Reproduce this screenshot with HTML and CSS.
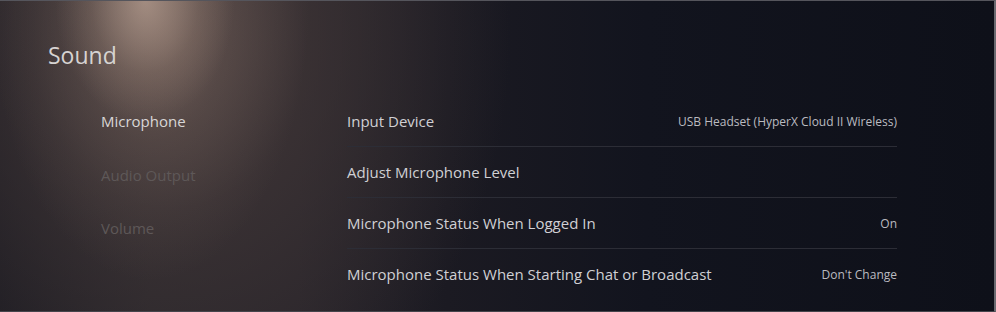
FILE: index.html
```html
<!DOCTYPE html>
<html lang="en">
<head>
<meta charset="utf-8">
<title>Sound</title>
<link rel="stylesheet" href="styles.css">
</head>
<body>
<div class="screen">
  <h1 class="title">Sound</h1>
  <div class="content">
    <nav class="nav">
      <div class="nav-item active">Microphone</div>
      <div class="nav-item">Audio Output</div>
      <div class="nav-item">Volume</div>
    </nav>
    <div class="list">
      <div class="row"><span class="label">Input Device</span><span class="value">USB Headset (HyperX Cloud II Wireless)</span></div>
      <div class="row"><span class="label">Adjust Microphone Level</span></div>
      <div class="row"><span class="label">Microphone Status When Logged In</span><span class="value">On</span></div>
      <div class="row last"><span class="label">Microphone Status When Starting Chat or Broadcast</span><span class="value">Don't Change</span></div>
    </div>
  </div>
</div>
</body>
</html>
```
FILE: styles.css
```css
html, body {
  margin: 0;
  padding: 0;
}
body {
  width: 996px;
  height: 312px;
  overflow: hidden;
  background: #111320;
  font-family: "Open Sans", "Noto Sans", sans-serif;
}
.screen {
  box-sizing: border-box;
  width: 996px;
  height: 312px;
  border-top: 1px solid #55555c;
  border-right: 2px solid #6a6a70;
  border-bottom: 1px solid #45454c;
  background:
    radial-gradient(ellipse 90px 120px at 145px 0px, rgba(195,170,155,0.6) 0%, rgba(170,145,130,0.2) 60%, rgba(150,125,115,0) 100%),
    radial-gradient(ellipse 160px 280px at 150px 0px, rgba(160,135,122,0.45) 0%, rgba(140,118,108,0.2) 50%, rgba(120,100,95,0) 100%),
    radial-gradient(ellipse 340px 420px at 170px 40px, rgba(90,75,72,0.85) 0%, rgba(68,57,57,0.6) 40%, rgba(40,36,42,0) 100%),
    linear-gradient(90deg, #1c1b22 0%, #28252a 15%, #28242a 30%, #1b1a22 45%, #12141e 65%, #0e1019 100%);
  padding: 39px 0 0 48px;
}
.title {
  margin: 0;
  font-size: 23px;
  font-weight: 400;
  line-height: 30px;
  color: #d6d3d2;
}
.content {
  display: flex;
  margin-top: 26px;
}
.nav {
  width: 246px;
  padding-left: 53px;
  display: flex;
  flex-direction: column;
  margin-top: -1px;
}
.nav-item {
  height: 53.5px;
  line-height: 53.5px;
  font-size: 15px;
  color: #5e5858;
}
.nav-item.active {
  color: #d8d6d6;
}
.list {
  width: 550px;
  display: flex;
  flex-direction: column;
}
.row {
  height: 50px;
  display: flex;
  align-items: center;
  justify-content: space-between;
  border-bottom: 1px solid #2c2d36;
}
.row.last {
  border-bottom: none;
}
.label {
  font-size: 15px;
  color: #d0d0d4;
}
.value {
  font-size: 12px;
  color: #bbbbc0;
}
```
